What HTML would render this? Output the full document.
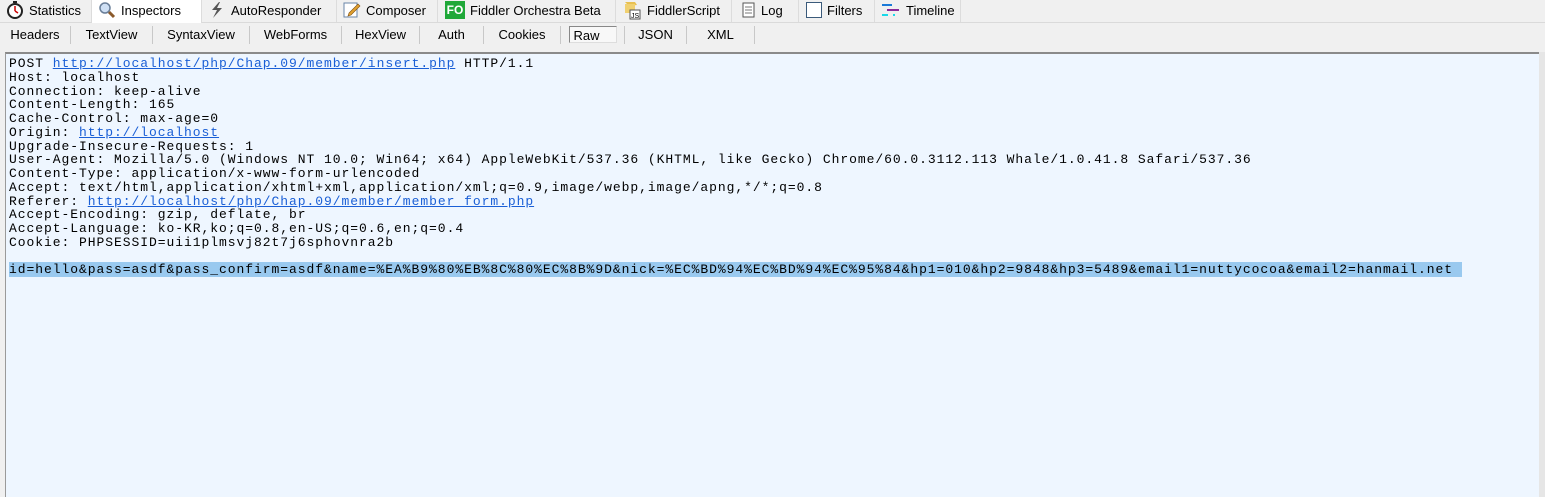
<!DOCTYPE html>
<html><head><style>
body{margin:0;width:1545px;height:497px;background:#f0f0f0;font-family:"Liberation Sans",sans-serif;font-size:13px;color:#000;overflow:hidden;position:relative}
.tabs{position:absolute;top:0;left:0;height:22px;width:1545px;background:#f0f0f0;border-bottom:1px solid #dadada}
.tab{position:absolute;top:0;height:22px;line-height:22px;border-right:1px solid #dcdcdc;box-sizing:border-box;padding-left:6px;white-space:nowrap}
.tab.act{background:#fff;height:23px}
.ic{display:inline-block;vertical-align:middle;margin-right:5px;margin-top:-3px}
.sub{position:absolute;top:23px;left:0;height:24px;width:1545px}
.st{position:absolute;top:3px;height:18px;line-height:18px;border-right:1px solid #c8c8c8;box-sizing:border-box;text-align:center}
.txt{position:absolute;left:5px;top:52px;width:1534px;height:445px;background:#eef6ff;border-top:2px solid #8a8a8a;border-left:1px solid #9a9a9a;box-sizing:border-box}
.sb{position:absolute;left:1539px;top:52px;width:6px;height:445px;background:#e6e6e6}
pre{margin:0;position:absolute;left:3px;top:3px;font-family:"Liberation Mono",monospace;font-size:13px;letter-spacing:0.95px;line-height:13.77px;color:#000}
a{color:#1a5fd6;text-decoration:underline}
.hl{background:#99c9ef}
</style></head><body>
<div class="tabs">
<div class="tab" style="left:0;width:92px"><svg class="ic" width="18" height="18" viewBox="0 0 18 18"><circle cx="9" cy="10" r="7" fill="#fff" stroke="#222" stroke-width="2"/><path d="M9 10V5M9 10l3 2" stroke="#c00" stroke-width="1.5"/><rect x="7" y="0" width="4" height="2" fill="#222"/></svg>Statistics</div>
<div class="tab act" style="left:92px;width:110px"><svg class="ic" width="18" height="18" viewBox="0 0 18 18"><circle cx="7" cy="7" r="5" fill="#cfe0f5" stroke="#6a7f99" stroke-width="1.5"/><path d="M11 11l5 5" stroke="#8b5a2b" stroke-width="3"/></svg>Inspectors</div>
<div class="tab" style="left:202px;width:135px"><svg class="ic" width="18" height="18" viewBox="0 0 18 18"><path d="M11 1L4 9h5l-4 8 9-10H9l3-6z" fill="#555"/></svg>AutoResponder</div>
<div class="tab" style="left:337px;width:101px"><svg class="ic" width="18" height="18" viewBox="0 0 18 18"><rect x="1" y="2" width="13" height="14" fill="#fff" stroke="#6a86a8"/><path d="M6 12l9-9 2 2-9 9-3 1z" fill="#e0a030" stroke="#805010" stroke-width=".6"/></svg>Composer</div>
<div class="tab" style="left:438px;width:178px;padding-left:7px"><span class="ic" style="display:inline-block;width:20px;height:18px;background:#1fa838;color:#fff;font-weight:bold;font-size:12px;line-height:18px;text-align:center">FO</span>Fiddler Orchestra Beta</div>
<div class="tab" style="left:616px;width:116px"><svg class="ic" width="20" height="20" viewBox="0 0 20 20"><path d="M3 2h10l2 3-8 1z" fill="#e8c050"/><rect x="3" y="4" width="10" height="9" fill="#f0d070"/><rect x="8" y="10" width="10" height="9" fill="#fff" stroke="#555"/><text x="9" y="18" font-size="7" font-family="Liberation Sans" fill="#000">JS</text></svg>FiddlerScript</div>
<div class="tab" style="left:732px;width:67px;padding-left:10px"><svg class="ic" width="14" height="16" viewBox="0 0 14 16"><rect x="1" y="1" width="11" height="14" fill="#fff" stroke="#555"/><path d="M3 5h7M3 8h7M3 11h7" stroke="#777"/></svg>Log</div>
<div class="tab" style="left:799px;width:76px;padding-left:7px"><span class="ic" style="display:inline-block;width:14px;height:14px;border:1px solid #3a5a7a;background:#fff"></span>Filters</div>
<div class="tab" style="left:875px;width:86px"><svg class="ic" width="20" height="14" viewBox="0 0 20 14"><path d="M1 2h10" stroke="#1a7ad8" stroke-width="2"/><path d="M6 7h12" stroke="#8a2a9a" stroke-width="2"/><path d="M1 12h6M12 12h2" stroke="#1ad8e8" stroke-width="2"/></svg>Timeline</div>
</div>
<div class="sub">
<div class="st" style="left:0;width:71px">Headers</div>
<div class="st" style="left:71px;width:82px">TextView</div>
<div class="st" style="left:153px;width:97px">SyntaxView</div>
<div class="st" style="left:250px;width:92px">WebForms</div>
<div class="st" style="left:342px;width:78px">HexView</div>
<div class="st" style="left:420px;width:64px">Auth</div>
<div class="st" style="left:484px;width:77px">Cookies</div>
<div class="st" style="left:561px;width:64px"><span style="display:inline-block;width:48px;height:17px;line-height:17px;border:1px solid #888;border-right-color:#ddd;border-bottom-color:#ddd;background:#f8f8f8;text-align:left;padding-left:4px;box-sizing:border-box">Raw</span></div>
<div class="st" style="left:625px;width:62px">JSON</div>
<div class="st" style="left:687px;width:68px">XML</div>
</div>
<div class="txt"><pre>POST <a>http://localhost/php/Chap.09/member/insert.php</a> HTTP/1.1
Host: localhost
Connection: keep-alive
Content-Length: 165
Cache-Control: max-age=0
Origin: <a>http://localhost</a>
Upgrade-Insecure-Requests: 1
User-Agent: Mozilla/5.0 (Windows NT 10.0; Win64; x64) AppleWebKit/537.36 (KHTML, like Gecko) Chrome/60.0.3112.113 Whale/1.0.41.8 Safari/537.36
Content-Type: application/x-www-form-urlencoded
Accept: text/html,application/xhtml+xml,application/xml;q=0.9,image/webp,image/apng,*/*;q=0.8
Referer: <a>http://localhost/php/Chap.09/member/member_form.php</a>
Accept-Encoding: gzip, deflate, br
Accept-Language: ko-KR,ko;q=0.8,en-US;q=0.6,en;q=0.4
Cookie: PHPSESSID=uii1plmsvj82t7j6sphovnra2b

<span class="hl">id=hello&amp;pass=asdf&amp;pass_confirm=asdf&amp;name=%EA%B9%80%EB%8C%80%EC%8B%9D&amp;nick=%EC%BD%94%EC%BD%94%EC%95%84&amp;hp1=010&amp;hp2=9848&amp;hp3=5489&amp;email1=nuttycocoa&amp;email2=hanmail.net </span></pre></div>
<div class="sb"></div>
</body></html>
